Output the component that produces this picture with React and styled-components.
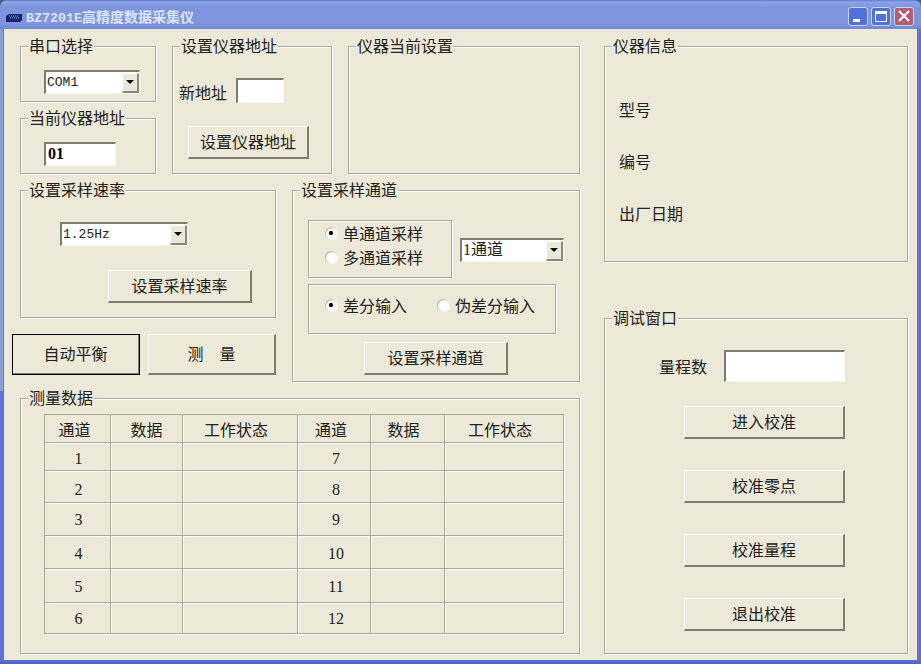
import React from "react";
import styled, { createGlobalStyle } from "styled-components";

const GlobalStyle = createGlobalStyle`
  html, body {
    margin: 0;
    background: #4a5a90;
  }
  * {
    box-sizing: border-box;
  }
`;

const Window = styled.div`
  width: 921px;
  height: 664px;
  overflow: hidden;
  display: flex;
  flex-direction: column;
  border-radius: 7px 7px 0 0;
  background:
    linear-gradient(#8b9ed2, #8b9ed2) 0 29px / 3px 362px no-repeat,
    linear-gradient(#6271d8 0, #6271d8 660px, #5260c0 664px);
  font-family: "Liberation Serif", "Noto Sans CJK SC", serif;
  font-size: 16px;
  color: #222;
`;

const TitleBar = styled.div`
  flex: none;
  height: 29px;
  padding: 4px 7px 0 6px;
  display: flex;
  align-items: flex-start;
  background: linear-gradient(#5f7ad2 0, #8ea3e7 2px, #7e95de 7px, #7f96de 24px, #6f88d6 29px);
`;

const TitleIcon = styled.svg`
  width: 16px;
  height: 8px;
  margin: 10px 4px 0 0;
`;

const TitleText = styled.div`
  flex: 1;
  line-height: 25px;
  font-family: "Noto Sans CJK SC", sans-serif;
  font-size: 14px;
  font-weight: 700;
  color: #dfe6fb;
`;

const TitleLatin = styled.span`
  font-family: "Liberation Mono", monospace;
  font-size: 13.33px;
`;

const CaptionButtons = styled.div`
  display: flex;
  gap: 3px;
  padding-top: 3px;
`;

const CaptionButton = styled.div`
  width: 20px;
  height: 19px;
  display: flex;
  align-items: center;
  justify-content: center;
  border: 1px solid #c9d5f3;
  border-radius: 3px;
  background: ${({ $close }) => ($close ? "#b35c72" : "#4f72d8")};
`;

const Body = styled.div`
  flex: 1;
  margin: 0 4px 4px;
  padding: 17px 9px 0 16px;
  display: flex;
  gap: 24px;
  background: #ece9d8;
`;

const MainColumn = styled.div`
  width: 560px;
  display: flex;
  flex-direction: column;
  gap: 16px;
`;

const SideColumn = styled.div`
  width: 304px;
  display: flex;
  flex-direction: column;
  gap: 56px;
`;

const Row = styled.div`
  display: flex;
  gap: 16px;
`;

const Stack = styled.div`
  display: flex;
  flex-direction: column;
  gap: 16px;
`;

const Panel = styled.div`
  position: relative;
  flex: none;
  width: ${({ $w }) => $w}px;
  height: ${({ $h }) => $h}px;
  padding: ${({ $pad }) => $pad};
  border: 1px solid #aca899;
  box-shadow: 1px 1px 0 #fff, inset 1px 1px 0 #fff;
`;

const Legend = styled.div`
  position: absolute;
  top: -8px;
  left: 7px;
  padding: 0 1px;
  line-height: 16px;
  background: #ece9d8;
`;

const Inset = styled.div`
  flex: none;
  width: ${({ $w }) => $w}px;
  height: ${({ $h }) => $h}px;
  border-style: solid;
  border-width: 2px 1px 1px 2px;
  border-color: #7d7c70 #f8f7f1 #f8f7f1 #7d7c70;
  background: #fff;
`;

const FieldValue = styled(Inset)`
  padding-left: 2px;
  font-weight: 700;
  line-height: 20px;
  color: #000;
`;

const Combo = styled(Inset)`
  display: flex;
  align-items: center;
  justify-content: space-between;
  padding-left: 1px;
  line-height: 19px;
`;

const ComboMono = styled.span`
  font-family: "Liberation Mono", monospace;
  font-size: 13px;
`;

const ComboLabel = styled.span`
  margin-bottom: 3px;
`;

const ComboArrow = styled.div`
  width: 17px;
  height: 20px;
  display: flex;
  align-items: center;
  justify-content: center;
  background: #ece9d8;
  border-style: solid;
  border-width: 1px 2px 2px 1px;
  border-color: #fff #8a897c #8a897c #fff;

  &::after {
    content: "";
    border-style: solid;
    border-width: 4px 4px 0;
    border-color: #000 transparent transparent;
  }
`;

const Button = styled.div`
  flex: none;
  width: ${({ $w }) => $w}px;
  height: ${({ $h }) => $h || 33}px;
  margin: ${({ $m }) => $m || 0};
  padding-bottom: 2px;
  display: flex;
  align-items: center;
  justify-content: center;
  background: #ece9d8;
  border-style: solid;
  border-width: 1px 2px 2px 1px;
  border-color: #fff #7f7d70 #7f7d70 #fff;
  outline: ${({ $default }) => ($default ? "1px solid #000" : "none")};
  outline-offset: ${({ $default }) => ($default ? "-1px" : "0")};
`;

const ActionRow = styled.div`
  display: flex;
  gap: 8px;
  margin-left: -8px;
`;

const AddressRow = styled.div`
  height: 25px;
  display: flex;
  align-items: center;
  gap: 9px;
`;

const AddressLabel = styled.span`
  line-height: 16px;
  margin-top: 7px;
`;

const Group = styled.div`
  flex: none;
  width: ${({ $w }) => $w}px;
  height: ${({ $h }) => $h}px;
  padding: ${({ $pad }) => $pad};
  border: 1px solid #aca899;
  box-shadow: 1px 1px 0 #fff, inset 1px 1px 0 #fff;
`;

const ChannelRow = styled.div`
  display: flex;
  gap: 8px;
  margin-bottom: 6px;
`;

const ComboSlot = styled.div`
  padding-top: 18px;
`;

const RadioLine = styled.div`
  display: flex;
  gap: 30px;
`;

const RadioLabel = styled.label`
  height: 24px;
  display: flex;
  align-items: center;
  gap: 6px;
`;

const Radio = styled.input.attrs({ type: "radio", readOnly: true })`
  appearance: none;
  width: 12px;
  height: 12px;
  margin: 0;
  border-radius: 50%;
  background: radial-gradient(circle at 60% 60%, #fff 0 50%, #d8d5c4 100%);
  box-shadow: inset 1px 1px 1px #b5b2a0, 1px 1px 0 #fbfaf5;

  &:checked {
    background:
      radial-gradient(circle, #000 0 1.8px, transparent 2.4px),
      radial-gradient(circle at 60% 60%, #fff 0 50%, #d8d5c4 100%);
  }
`;

const DataGrid = styled.div`
  display: grid;
  grid-template-columns: 66px 72px 115px 73px 74px 119px;
  grid-template-rows: 28px 28px 32px 33px 33px 34px 31px;
  width: 520px;
  border-top: 1px solid #aca899;
  border-left: 1px solid #aca899;
`;

const Cell = styled.div`
  display: flex;
  align-items: center;
  justify-content: center;
  border-right: 1px solid #aca899;
  border-bottom: 1px solid #aca899;
  box-shadow: 1px 1px 0 #fff;
`;

const HeaderCell = styled(Cell)`
  padding-right: ${({ $nudge }) => $nudge}px;
`;

const NumberCell = styled(Cell)`
  padding-top: ${({ $nudge }) => $nudge}px;
  padding-left: ${({ $left }) => $left}px;
`;

const InfoLine = styled.div`
  line-height: 16px;
  margin-bottom: 36px;
`;

const RangeRow = styled.div`
  display: flex;
  align-items: center;
  gap: 17px;
  margin: 0 0 24px 54px;
`;

const CalibrationList = styled.div`
  display: flex;
  flex-direction: column;
  gap: 31px;
  margin-left: 79px;
`;

const headers = [
  { text: "通道", nudge: 6 },
  { text: "数据", nudge: 0 },
  { text: "工作状态", nudge: 8 },
  { text: "通道", nudge: 6 },
  { text: "数据", nudge: 8 },
  { text: "工作状态", nudge: 8 },
];

const channels = [
  { left: 1, right: 7, nudge: 4 },
  { left: 2, right: 8, nudge: 6 },
  { left: 3, right: 9, nudge: 2 },
  { left: 4, right: 10, nudge: 4 },
  { left: 5, right: 11, nudge: 2 },
  { left: 6, right: 12, nudge: 2 },
];

const App = () => {
  return (
    <Window>
      <GlobalStyle />
      <TitleBar>
        <TitleIcon viewBox="0 0 16 8">
          <path d="M0 2 L3 0 H16 V6 L14 8 H0 Z" fill="#14246e" />
          <path d="M3 2 H13 M4 4 H14" stroke="#9fb4ee" strokeWidth="1" strokeDasharray="1 1" />
        </TitleIcon>
        <TitleText>
          <TitleLatin>BZ7201E</TitleLatin>高精度数据采集仪
        </TitleText>
        <CaptionButtons>
          <CaptionButton>
            <svg width="18" height="17" viewBox="0 0 18 17">
              <rect x="4" y="11" width="7" height="3" fill="#fff" />
            </svg>
          </CaptionButton>
          <CaptionButton>
            <svg width="18" height="17" viewBox="0 0 18 17">
              <path d="M3.5 3.5 H14.5 V13.5 H3.5 Z" fill="none" stroke="#fff" />
              <rect x="3" y="3" width="12" height="3" fill="#fff" />
            </svg>
          </CaptionButton>
          <CaptionButton $close>
            <svg width="18" height="17" viewBox="0 0 18 17">
              <path d="M4 3 L14 13 M14 3 L4 13" stroke="#fff" strokeWidth="2" />
            </svg>
          </CaptionButton>
        </CaptionButtons>
      </TitleBar>
      <Body>
        <MainColumn>
          <Row>
            <Stack>
              <Panel $w={136} $h={56} $pad="23px 0 0 23px">
                <Legend>串口选择</Legend>
                <Combo $w={96} $h={24}>
                  <ComboMono>COM1</ComboMono>
                  <ComboArrow />
                </Combo>
              </Panel>
              <Panel $w={136} $h={56} $pad="23px 0 0 23px">
                <Legend>当前仪器地址</Legend>
                <FieldValue $w={72} $h={24}>01</FieldValue>
              </Panel>
            </Stack>
            <Panel $w={160} $h={128} $pad="31px 0 0 6px">
              <Legend>设置仪器地址</Legend>
              <AddressRow>
                <AddressLabel>新地址</AddressLabel>
                <Inset $w={48} $h={25} />
              </AddressRow>
              <Button $w={121} $m="23px 0 0 9px">设置仪器地址</Button>
            </Panel>
            <Panel $w={232} $h={128}>
              <Legend>仪器当前设置</Legend>
            </Panel>
          </Row>
          <Row>
            <Stack>
              <Panel $w={256} $h={128} $pad="31px 0 0 39px">
                <Legend>设置采样速率</Legend>
                <Combo $w={128} $h={24}>
                  <ComboMono>1.25Hz</ComboMono>
                  <ComboArrow />
                </Combo>
                <Button $w={144} $m="24px 0 0 48px">设置采样速率</Button>
              </Panel>
              <ActionRow>
                <Button $w={128} $h={41} $default>自动平衡</Button>
                <Button $w={128} $h={41}>测　量</Button>
              </ActionRow>
            </Stack>
            <Panel $w={288} $h={192} $pad="29px 0 0 15px">
              <Legend>设置采样通道</Legend>
              <ChannelRow>
                <Group $w={144} $h={58} $pad="0 0 0 16px">
                  <RadioLabel>
                    <Radio defaultChecked name="mode" />
                    单通道采样
                  </RadioLabel>
                  <RadioLabel>
                    <Radio name="mode" />
                    多通道采样
                  </RadioLabel>
                </Group>
                <ComboSlot>
                  <Combo $w={104} $h={24}>
                    <ComboLabel>1通道</ComboLabel>
                    <ComboArrow />
                  </Combo>
                </ComboSlot>
              </ChannelRow>
              <Group $w={248} $h={50} $pad="8px 0 0 16px">
                <RadioLine>
                  <RadioLabel>
                    <Radio defaultChecked name="input" />
                    差分输入
                  </RadioLabel>
                  <RadioLabel>
                    <Radio name="input" />
                    伪差分输入
                  </RadioLabel>
                </RadioLine>
              </Group>
              <Button $w={144} $m="8px 0 0 56px">设置采样通道</Button>
            </Panel>
          </Row>
          <Panel $w={560} $h={256} $pad="15px 0 0 23px">
            <Legend>测量数据</Legend>
            <DataGrid>
              {headers.map((header, index) => (
                <HeaderCell key={index} $nudge={header.nudge}>{header.text}</HeaderCell>
              ))}
              {channels.map((row) => (
                <React.Fragment key={row.left}>
                  <NumberCell $nudge={row.nudge} $left={2}>{row.left}</NumberCell>
                  <Cell />
                  <Cell />
                  <NumberCell $nudge={row.nudge} $left={4}>{row.right}</NumberCell>
                  <Cell />
                  <Cell />
                </React.Fragment>
              ))}
            </DataGrid>
          </Panel>
        </MainColumn>
        <SideColumn>
          <Panel $w={304} $h={216} $pad="56px 0 0 14px">
            <Legend>仪器信息</Legend>
            <InfoLine>型号</InfoLine>
            <InfoLine>编号</InfoLine>
            <InfoLine>出厂日期</InfoLine>
          </Panel>
          <Panel $w={304} $h={336} $pad="31px 0 0 0">
            <Legend>调试窗口</Legend>
            <RangeRow>
              <span>量程数</span>
              <Inset $w={121} $h={32} />
            </RangeRow>
            <CalibrationList>
              <Button $w={161}>进入校准</Button>
              <Button $w={161}>校准零点</Button>
              <Button $w={161}>校准量程</Button>
              <Button $w={161}>退出校准</Button>
            </CalibrationList>
          </Panel>
        </SideColumn>
      </Body>
    </Window>
  );
};

export default App;
